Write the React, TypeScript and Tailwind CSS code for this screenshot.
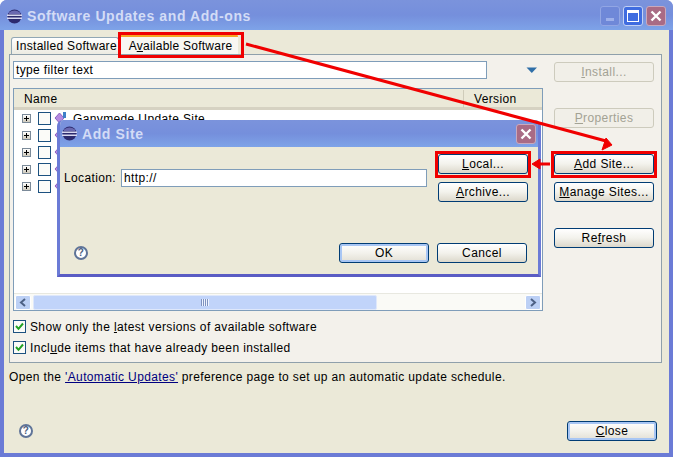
import React from "react";

const font = { fontFamily: '"Liberation Sans", sans-serif' };

function Eclipse() {
  return (
    <svg width="15" height="15" viewBox="0 0 15 15" className="shrink-0">
      <circle cx="7.5" cy="7.5" r="7" fill="#2c2a6e" />
      <rect x="0" y="5.5" width="15" height="1.5" fill="#d8d8f0" />
      <rect x="0" y="8.5" width="15" height="1.5" fill="#d8d8f0" />
      <path d="M2 3.5 Q7.5 -0.5 13 3.5 L13 5 L2 5 Z" fill="#6a68b0" />
    </svg>
  );
}

function Btn({
  children,
  disabled = false,
  isDefault = false,
  className = "",
}: {
  children: React.ReactNode;
  disabled?: boolean;
  isDefault?: boolean;
  className?: string;
}) {
  const look = disabled
    ? "border-[#cdcbbd] bg-[#f1efe8] text-[#a3a294]"
    : isDefault
      ? "border-[#003c74] bg-gradient-to-b from-[#ffffff] via-[#f3f2ec] to-[#e2dfd4] text-black shadow-[inset_0_0_0_2px_#a8c6f4]"
      : "border-[#003c74] bg-gradient-to-b from-[#ffffff] via-[#f3f2ec] to-[#dcd8cb] text-black";
  return (
    <div className={`flex h-[20px] items-center justify-center rounded-[3px] border text-[12px] tracking-[0.4px] ${look} ${className}`}>
      <span>{children}</span>
    </div>
  );
}

function Check({ on = false }: { on?: boolean }) {
  return (
    <div className="flex h-[13px] w-[13px] shrink-0 items-center justify-center border border-[#1c5180] bg-[#fbfbf8]">
      {on && (
        <svg width="9" height="9" viewBox="0 0 9 9">
          <path d="M1 4 L3.5 6.8 L8 1.5" fill="none" stroke="#21a121" strokeWidth="2" />
        </svg>
      )}
    </div>
  );
}

function Plus() {
  return (
    <div className="relative h-[9px] w-[9px] shrink-0 border border-[#7b8a99] bg-gradient-to-b from-white to-[#cfcabc]">
      <div className="absolute left-[1px] top-[3px] h-[1px] w-[5px] bg-black" />
      <div className="absolute left-[3px] top-[1px] h-[5px] w-[1px] bg-black" />
    </div>
  );
}

function Help() {
  return (
    <div className="flex h-[14px] w-[14px] items-center justify-center rounded-full border-2 border-[#5f7498] bg-white text-[10px] font-bold leading-none text-[#4d5f80]">
      ?
    </div>
  );
}

function Row({ first = false }: { first?: boolean }) {
  return (
    <div className="flex h-[17px] shrink-0 items-center pl-[8px]">
      <Plus />
      <div className="ml-[7px]">
        <Check />
      </div>
      <svg width="13" height="13" viewBox="0 0 13 13" className="ml-[3px] shrink-0">
        <path d="M5.5 1 L10 6 L5.5 11 L1 6 Z" fill="#b68ae0" stroke="#8d62c0" />
        <rect x="9" y="0" width="3" height="6" fill="#3f7fc8" />
      </svg>
      {first && <span className="ml-[6px] whitespace-nowrap text-[12px]">Ganymede Update Site</span>}
    </div>
  );
}

function CloseGlyph({ size = 12 }: { size?: number }) {
  return (
    <svg width={size} height={size} viewBox="0 0 12 12">
      <path d="M1.5 1.5 L10.5 10.5 M10.5 1.5 L1.5 10.5" stroke="#ffffff" strokeWidth="2.4" />
    </svg>
  );
}

export default function App() {
  return (
    <div
      style={font}
      className="relative flex h-[457px] w-[673px] flex-col overflow-hidden rounded-t-[7px] bg-[#6b7bd6] text-[12px] text-black"
    >
      {/* Title bar */}
      <div className="flex h-[30px] shrink-0 items-center bg-gradient-to-b from-[#7b93dc] via-[#758fdc] to-[#7ea3e8] pl-[7px] pr-[7px] pt-[2px]">
        <Eclipse />
        <span className="ml-[5px] text-[14px] font-bold tracking-[0.6px] text-[#d3dcf6]">Software Updates and Add-ons</span>
        <div className="ml-auto flex gap-[3px]">
          <div className="flex h-[20px] w-[20px] items-end justify-center rounded-[3px] border border-[#92a6e4] bg-[#6f88d8] pb-[4px]">
            <div className="h-[3px] w-[8px] bg-[#9db0ea]" />
          </div>
          <div className="flex h-[20px] w-[20px] items-center justify-center rounded-[3px] border border-[#c3d2f4] bg-[#3f6ce0]">
            <div className="h-[12px] w-[12px] border border-t-[3px] border-white" />
          </div>
          <div className="flex h-[20px] w-[20px] items-center justify-center rounded-[3px] border border-[#c9a8bc] bg-[#a96b85]">
            <CloseGlyph />
          </div>
        </div>
      </div>

      {/* Body */}
      <div className="mx-[4px] mb-[4px] flex flex-1 flex-col bg-[#ebe9d8] pl-[5px] pr-[7px] pt-[3px] tracking-[0.37px]">
        <div className="flex h-[21px] shrink-0 items-end pl-[2px]">
          <div className="flex h-[17px] w-[108px] items-center justify-center whitespace-nowrap rounded-t-[3px] border border-b-0 border-[#91a7b4] bg-gradient-to-b from-white to-[#ecebe2] pl-[3px] tracking-[0.3px]">
            Installed Software
          </div>
          <div className="ml-[1px] flex h-[20px] w-[118px] items-center justify-center whitespace-nowrap rounded-t-[3px] border-t-[3px] border-[#f5a623] bg-[#f8f7f2] pl-[3px] tracking-[0.25px]">
            <span>
              A<u>v</u>ailable Software
            </span>
          </div>
        </div>

        <div className="flex h-[309px] shrink-0 border border-[#8fa0ab] bg-[#f3f1eb]">
          <div className="ml-[3px] w-[530px] shrink-0">
            <div className="mt-[6px] flex items-center">
              <div className="flex h-[18px] w-[474px] items-center border border-[#7f9db9] bg-white pl-[2px]">
                type filter text
              </div>
              <svg width="12" height="7" viewBox="0 0 12 7" className="ml-[39px]">
                <path d="M0.5 0.5 H11 L5.8 6 Z" fill="#2f6fa8" />
              </svg>
            </div>

            <div className="mt-[9px] flex h-[223px] flex-col border border-[#7f9db9] bg-white">
              <div className="flex h-[21px] shrink-0 items-center border-b-[3px] border-[#d6d2c2] bg-[#ebe9d8] pt-[2px]">
                <span className="ml-[10px] w-[440px] border-r border-[#cfccba]">Name</span>
                <span className="ml-[10px]">Version</span>
              </div>
              <div className="flex-1 overflow-hidden">
                <Row first />
                <Row />
                <Row />
                <Row />
                <Row />
              </div>
              <div className="flex h-[17px] shrink-0 items-center border-t border-[#e8e8e0] bg-[#fafaf6] px-[1px]">
                <div className="flex h-[15px] w-[16px] items-center justify-center rounded-[2px] border border-white bg-[#bcd0f5]">
                  <svg width="8" height="9" viewBox="0 0 8 9">
                    <path d="M6 1 L2 4.5 L6 8" fill="none" stroke="#4d6185" strokeWidth="2" />
                  </svg>
                </div>
                <div className="ml-[2px] flex h-[15px] w-[344px] items-center justify-center rounded-[2px] border border-[#dfe8fb] bg-[#c1d4fa]">
                  <div className="h-[7px] w-[8px] bg-[repeating-linear-gradient(90deg,#7f93c0_0,#7f93c0_1px,#eef3ff_1px,#eef3ff_2px)]" />
                </div>
                <div className="ml-auto flex h-[15px] w-[16px] items-center justify-center rounded-[2px] border border-white bg-[#bcd0f5]">
                  <svg width="8" height="9" viewBox="0 0 8 9">
                    <path d="M2 1 L6 4.5 L2 8" fill="none" stroke="#4d6185" strokeWidth="2" />
                  </svg>
                </div>
              </div>
            </div>

            <div className="mt-[9px] flex h-[13px] items-center gap-[4px]">
              <Check on />
              <span>
                Show only the <u>l</u>atest versions of available software
              </span>
            </div>
            <div className="mt-[8px] flex h-[13px] items-center gap-[4px]">
              <Check on />
              <span>
                Incl<u>u</u>de items that have already been installed
              </span>
            </div>
          </div>

          <div className="ml-[11px] w-[100px] shrink-0 pt-[7px]">
            <Btn disabled>
              <u>I</u>nstall...
            </Btn>
            <Btn disabled className="mt-[26px]">
              <u>P</u>roperties
            </Btn>
            <Btn className="mt-[26px]">
              <u>A</u>dd Site...
            </Btn>
            <Btn className="mt-[8px]">
              <u>M</u>anage Sites...
            </Btn>
            <Btn className="mt-[26px]">
              Re<u>f</u>resh
            </Btn>
          </div>
        </div>

        <div className="mt-[5px] whitespace-nowrap">
          Open the <u className="text-[#000080]">'Automatic Updates'</u> preference page to set up an automatic update schedule.
        </div>

        <div className="mb-[12px] mt-auto flex items-center justify-between pl-[10px] pr-[5px]">
          <Help />
          <Btn isDefault className="w-[90px]">
            <u>C</u>lose
          </Btn>
        </div>
      </div>

      {/* Add Site dialog */}
      <div className="absolute left-[57px] top-[120px] flex h-[157px] w-[484px] flex-col overflow-hidden rounded-t-[6px] border-x-[3px] border-b-[3px] border-x-[#6b7bd6] border-b-[#5a5cc4] bg-[#ebe9d8] tracking-[0.37px]">
        <div className="-mx-[3px] flex h-[27px] shrink-0 items-center bg-gradient-to-b from-[#7b93dc] via-[#758fdc] to-[#7ea3e8] pl-[5px] pr-[5px]">
          <Eclipse />
          <span className="ml-[5px] pt-[1px] text-[14px] font-bold tracking-[0.6px] text-[#d3dcf6]">Add Site</span>
          <div className="ml-auto flex h-[20px] w-[20px] items-center justify-center rounded-[3px] border border-[#c9a8bc] bg-[#a96b85]">
            <CloseGlyph />
          </div>
        </div>
        <div className="flex flex-1 flex-col px-[4px]">
          <div className="flex">
            <div className="mt-[22px] flex h-[18px] items-center">
              <span className="w-[57px] whitespace-nowrap">Location:</span>
              <div className="flex h-[18px] w-[306px] items-center border border-[#7f9db9] bg-white pl-[2px]">http://</div>
            </div>
            <div className="ml-[11px] w-[90px] pt-[7px]">
              <Btn>
                <u>L</u>ocal...
              </Btn>
              <Btn className="mt-[8px]">
                <u>A</u>rchive...
              </Btn>
            </div>
          </div>
          <div className="mb-[11px] mt-auto flex items-center pl-[10px]">
            <Help />
            <Btn isDefault className="ml-[251px] w-[90px]">
              OK
            </Btn>
            <Btn className="ml-[8px] w-[90px]">Cancel</Btn>
          </div>
        </div>
      </div>

      {/* Red callouts drawn over the screenshot */}
      <svg width="673" height="457" viewBox="0 0 673 457" className="pointer-events-none absolute left-0 top-0">
        <g fill="none" stroke="#f00000" strokeWidth="3">
          <rect x="119.5" y="33.5" width="123" height="23" />
          <rect x="436.5" y="152.5" width="93" height="24" />
          <rect x="552.5" y="152.5" width="103" height="24" />
        </g>
        <path d="M246 44 L606 141" stroke="#f00000" strokeWidth="3" />
        <path d="M612 145 L602 150 L606 138 Z" fill="#f00000" stroke="#f00000" />
        <path d="M550 164 L538 164" stroke="#f00000" strokeWidth="3" />
        <path d="M532 164 L540 159 L540 169 Z" fill="#f00000" stroke="#f00000" />
      </svg>
    </div>
  );
}
